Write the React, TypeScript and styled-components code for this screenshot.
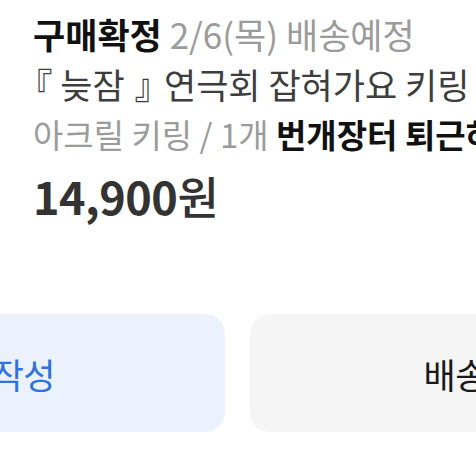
import React from 'react';
import styled, { createGlobalStyle } from 'styled-components';

const GlobalStyle = createGlobalStyle`
  html, body {
    margin: 0;
    padding: 0;
    background: #ffffff;
    overflow: hidden;
  }
  body {
    width: 476px;
    height: 476px;
    font-family: "Noto Sans CJK KR", "Noto Sans", sans-serif;
  }
`;

const Page = styled.div`
  width: 476px;
  height: 476px;
  overflow: hidden;
  display: flex;
  flex-direction: column;
`;

const Info = styled.div`
  padding: 9px 0 0 33px;
  display: flex;
  flex-direction: column;
  white-space: nowrap;
`;

const Line = styled.div<{ $size: number }>`
  font-size: ${(p) => p.$size}px;
  line-height: 50px;
  letter-spacing: 0;
`;

const Strong = styled.span`
  font-weight: 700;
  color: #111;
`;

const Muted = styled.span`
  color: #9b9b9b;
  font-weight: 400;
`;

const Title = styled.span`
  color: #3d3d3d;
  font-weight: 400;
`;

const Bracket = styled.span<{ $close?: boolean }>`
  font-feature-settings: "halt" 1;
  color: #3d3d3d;
  margin-left: 2px;
  margin-right: ${(p) => (p.$close ? '4px' : '0')};
`;

const Price = styled.div`
  margin-top: 9px;
  font-size: 45px;
  line-height: 56px;
  font-weight: 700;
  color: #333;
  letter-spacing: -0.5px;
`;

const Won = styled.span`
  font-weight: 500;
`;

const Actions = styled.div`
  margin-top: 90px;
  margin-left: -249px;
  display: flex;
  gap: 25px;
`;

const ActionButton = styled.button<{ $primary?: boolean }>`
  flex: 0 0 474px;
  height: 118px;
  padding: 0;
  border: none;
  border-radius: 20px;
  background: ${(p) => (p.$primary ? '#ebf2fd' : '#f5f5f5')};
  color: ${(p) => (p.$primary ? '#2d72df' : '#1a1a1a')};
  font-family: inherit;
  font-size: 35px;
  font-weight: 400;
  letter-spacing: -0.5px;
  white-space: nowrap;
`;

export default function App() {
  return (
    <Page>
      <GlobalStyle />
      <Info>
        <Line $size={35}>
          <Strong>구매확정</Strong> <Muted>2/6(목) 배송예정</Muted>
        </Line>
        <Line $size={35}>
          <Title>
            <Bracket>『</Bracket> 늦잠 <Bracket $close>』</Bracket> 연극회 잡혀가요 키링
          </Title>
        </Line>
        <Line $size={33}>
          <Muted>아크릴 키링 / 1개</Muted> <Strong>번개장터 퇴근하기</Strong>
        </Line>
        <Price>
          14,900<Won>원</Won>
        </Price>
      </Info>
      <Actions>
        <ActionButton $primary>후기 작성</ActionButton>
        <ActionButton>배송조회</ActionButton>
      </Actions>
    </Page>
  );
}
